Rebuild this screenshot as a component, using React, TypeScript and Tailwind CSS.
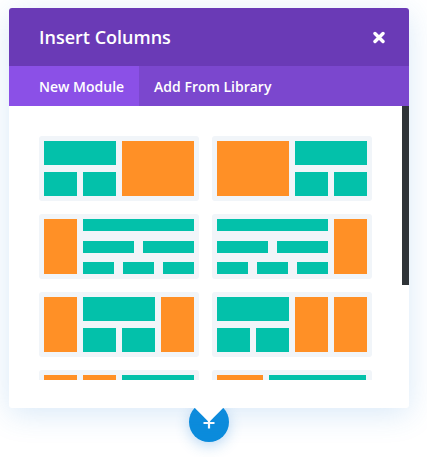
import React from "react";

const teal = "bg-[#03c1aa]";
const orange = "bg-[#ff9026]";

function Block({ className }: { className: string }) {
  return <div className={className} />;
}

// half-width column: wide teal on top, two small below
function StackHalf() {
  return (
    <div className="flex w-[72px] flex-col gap-[7px]">
      <Block className={`h-[24px] ${teal}`} />
      <div className="flex gap-[6px]">
        <Block className={`h-[24px] w-[33px] ${teal}`} />
        <Block className={`h-[24px] w-[33px] ${teal}`} />
      </div>
    </div>
  );
}

function Bars() {
  return (
    <div className="flex w-[111px] flex-col justify-between">
      <Block className={`h-[12px] ${teal}`} />
      <div className="flex gap-[9px]">
        <Block className={`h-[12px] flex-1 ${teal}`} />
        <Block className={`h-[12px] flex-1 ${teal}`} />
      </div>
      <div className="flex gap-[9px]">
        <Block className={`h-[12px] flex-1 ${teal}`} />
        <Block className={`h-[12px] flex-1 ${teal}`} />
        <Block className={`h-[12px] flex-1 ${teal}`} />
      </div>
    </div>
  );
}

function Card({ children }: { children: React.ReactNode }) {
  return (
    <div className="rounded-[3px] bg-[#f1f5f9] p-[5px]">
      <div className="flex h-[55px] gap-[6px]">{children}</div>
    </div>
  );
}

export default function App() {
  return (
    <div className="min-h-[457px] bg-white pl-[9px] pt-[8px] font-['Open_Sans',sans-serif]">
      <div className="relative z-10 w-[400px] rounded-[3px] bg-white shadow-[0_6px_30px_rgba(43,135,218,0.18)]">
        <div className="flex h-[58px] items-center justify-between rounded-t-[3px] bg-[#6a3ab6] pl-[30px] pr-[24px]">
          <span className="text-[18px] font-semibold leading-none text-white">
            Insert Columns
          </span>
          <svg width="12" height="13" viewBox="0 0 12 13">
            <path
              d="M2 2.5 L10 10.5 M10 2.5 L2 10.5"
              stroke="white"
              strokeWidth="3.4"
              strokeLinecap="round"
            />
          </svg>
        </div>
        <div className="flex h-[40px] bg-[#7b47ce] text-[14px] font-semibold text-white">
          <div className="flex items-center bg-[#8b50e7] pl-[30px] pr-[15px]">
            New Module
          </div>
          <div className="flex items-center px-[15px]">Add From Library</div>
        </div>
        <div className="relative pb-[28px]">
          <div className="h-[274px] overflow-hidden pl-[30px] pt-[30px]">
            <div className="grid w-[333px] grid-cols-[160px_160px] gap-[13px]">
              <Card>
                <StackHalf />
                <Block className={`w-[72px] ${orange}`} />
              </Card>
              <Card>
                <Block className={`w-[72px] ${orange}`} />
                <StackHalf />
              </Card>
              <Card>
                <Block className={`w-[33px] ${orange}`} />
                <Bars />
              </Card>
              <Card>
                <Bars />
                <Block className={`w-[33px] ${orange}`} />
              </Card>
              <Card>
                <Block className={`w-[33px] ${orange}`} />
                <StackHalf />
                <Block className={`w-[33px] ${orange}`} />
              </Card>
              <Card>
                <StackHalf />
                <Block className={`w-[33px] ${orange}`} />
                <Block className={`w-[33px] ${orange}`} />
              </Card>
              <Card>
                <Block className={`w-[33px] ${orange}`} />
                <Block className={`w-[33px] ${orange}`} />
                <Block className={`flex-1 ${teal}`} />
              </Card>
              <Card>
                <Block className={`w-[46px] ${orange}`} />
                <Block className={`w-[97px] ${teal}`} />
              </Card>
            </div>
          </div>
          <div className="absolute right-0 top-0 h-[179px] w-[7px] bg-[#2f3438]" />
        </div>
        <div className="absolute bottom-[-10px] left-[190px] h-[20px] w-[20px] rotate-45 bg-white" />
      </div>
      <div className="-mt-[6px] ml-[180px] flex h-[40px] w-[40px] items-center justify-center rounded-full bg-[#0b8cdc] shadow-[0_4px_14px_rgba(43,135,218,0.3)]">
        <svg width="12" height="12" viewBox="0 0 12 12" className="mt-[2px]">
          <path d="M6 0.5 V11.5 M0.5 6 H11.5" stroke="white" strokeWidth="2.2" />
        </svg>
      </div>
    </div>
  );
}
